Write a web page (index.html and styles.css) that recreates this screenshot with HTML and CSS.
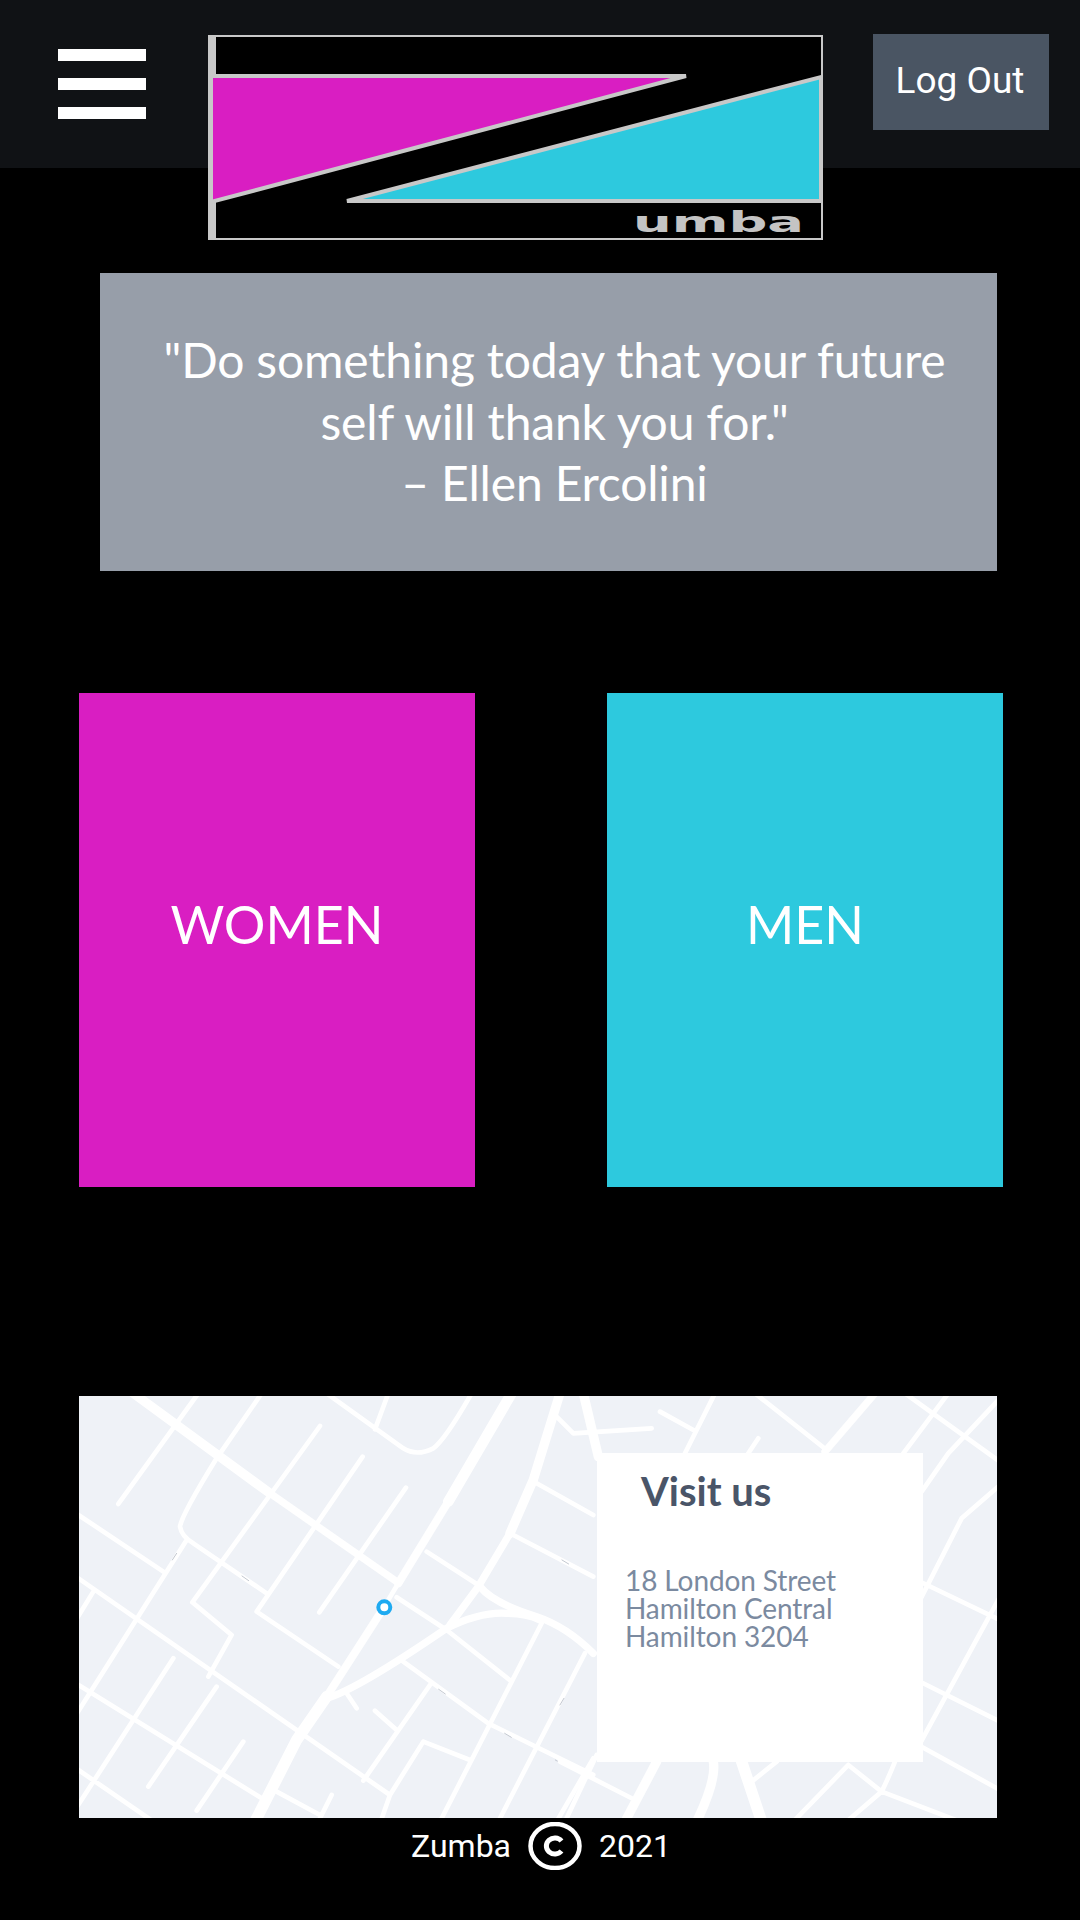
FILE: index.html
```html
<!DOCTYPE html>
<html lang="en">
<head>
    <meta charset="UTF-8">
    <meta name="viewport" content="width=device-width, initial-scale=1.0">
    <title>Zumba</title>
    <link rel="stylesheet" href="styles.css">
</head>
<body>

<header class="top-bar">
    <div class="menu-icon">
        <span></span>
        <span></span>
        <span></span>
    </div>
    <svg class="logo" viewBox="0 0 615 205">
        <rect x="0" y="0" width="615" height="205" fill="#000"/>
        <rect x="1" y="1" width="613" height="203" fill="none" stroke="#c8c8c8" stroke-width="2"/>
        <rect x="0" y="0" width="8" height="205" fill="#c8c8c8"/>
        <polygon points="3,41 478,41 3,167" fill="#d91ec2" stroke="#c8c8c8" stroke-width="4"/>
        <polygon points="613,42 613,166 139,166" fill="#2dc9de" stroke="#c8c8c8" stroke-width="4"/>
        <text class="logo-text" x="425" y="197" textLength="171" lengthAdjust="spacingAndGlyphs">umba</text>
    </svg>
    <button class="logout" type="button">Log Out</button>
</header>

<section class="quote">
    <p>"Do something today that your future<br>self will thank you for."<br>– Ellen Ercolini</p>
</section>

<section class="tiles">
    <a class="tile tile-women" href="#">WOMEN</a>
    <a class="tile tile-men" href="#">MEN</a>
</section>

<section class="map">
    <svg class="map-art" viewBox="79 1396 918 422">
        <rect x="79" y="1396" width="918" height="422" fill="#eff2f7"/>
        <!-- left part of the map -->
        <g transform="translate(70 1390) scale(.3333)" fill="none" stroke="#fff" stroke-linecap="round" stroke-linejoin="round">
            <path stroke-width="14" d="M145 342L385 10M575 10L440 205Q335 375 330 410Q335 440 370 460L590 610M750 108L367 637L485 735L415 860M878 200L560 665L805 830M1008 293L748 667M770 10L1000 175Q1040 200 1090 175Q1125 150 1205 10M955 10L915 118M1070 485L1225 585M980 622L1130 720L1325 875M1415 700L1110 1295M1545 790L1285 1295M1570 1105L1460 1295M1000 815L1255 1000L1570 1155M1080 885L880 1172M915 962L980 1020M830 910L860 955M1060 1055L1200 1110M1060 1055L960 1215L932 1295M18 370L280 545M18 560L960 1215M350 450L18 975M70 605L18 690M18 880L575 1225M310 805L18 1255M440 890L235 1190M520 1055L380 1262M18 1135L250 1295M620 1205L750 1275M785 1215L745 1295M1400 280L1570 375M1330 435L1570 560M985 580L940 655"/>
            <path stroke-width="28" d="M190 10L600 310"/>
            <path stroke-width="22" d="M600 310L985 578"/>
            <path stroke-width="32" d="M1325 10L1135 335"/>
            <path stroke-width="24" d="M1135 335L985 580M940 655L770 920"/>
            <path stroke-width="34" d="M770 920L680 1050L555 1295"/>
            <path stroke-width="28" d="M1470 10L1390 270L1320 430"/>
            <path stroke-width="22" d="M1320 430L1225 590L1140 705"/>
            <path stroke-width="22" d="M1230 590Q1270 640 1400 680Q1490 710 1570 790"/>
            <path stroke-width="22" d="M770 925Q860 900 1130 715Q1230 665 1310 670Q1370 670 1410 690"/>
            <path stroke-width="3" stroke="#c3c8d0" d="M307 510L320 490M516 558L536 572M1476 510L1496 522M1106 898L1126 912M1304 1030L1324 1042M1456 1110L1476 1122M1470 945L1482 925"/>
        </g>
        <!-- right part of the map, mostly behind the card -->
        <g transform="translate(560 1390) scale(.3333)" fill="none" stroke="#fff" stroke-linecap="round" stroke-linejoin="round">
            <path stroke-width="14" d="M-20 70L40 130L275 115M300 65L400 120M465 10L375 190M595 145L565 190M585 10L800 180M1035 10L1320 215M1165 10L1030 190M1320 25L1165 190L1085 305M1320 285L1205 385L1070 650M1070 570L1320 690M1320 620L1075 1070M1070 870L1320 995M1075 1065L1320 1200M0 1115L215 1225M110 1095L15 1295M650 1115L575 1175M865 1125L700 1295M865 1125L965 1205L1200 1295M1005 1115Q985 1165 965 1205L860 1295"/>
            <path stroke-width="22" d="M945 10L795 185"/>
            <path stroke-width="28" d="M70 10L115 200M290 1115L195 1295M460 1115Q470 1170 410 1295"/>
            <path stroke-width="34" d="M545 1115L605 1295"/>
        </g>
        <circle class="map-pin" cx="384.3" cy="1607.3" r="6"/>
    </svg>
    <div class="visit-card">
        <h3>Visit us</h3>
        <p>18 London Street<br>Hamilton Central<br>Hamilton 3204</p>
    </div>
</section>

<footer class="site-footer">
    <span>Zumba</span>
    <svg class="copyright" viewBox="0 0 54 48">
        <ellipse cx="27" cy="24" rx="24.500" ry="22" fill="none" stroke="#fff" stroke-width="4.500"/>
        <path d="M33.500 19A8.500 8 0 1 0 33.500 29" fill="none" stroke="#fff" stroke-width="5"/>
    </svg>
    <span>2021</span>
</footer>

</body>
</html>
```

FILE: styles.css
```css
body {
    font-family: 'Lato', sans-serif;
    margin: 0;
    padding: 0;
    background-color: #000;
    min-height: 100vh;
}
.top-bar {
    display: flex;
    align-items: flex-start;
    height: 168px;
    background-color: #101215;
}
.menu-icon {
    display: flex;
    flex-direction: column;
    gap: 17px;
    width: 88px;
    margin: 49px 0 0 58px;
}
.menu-icon span {
    display: block;
    height: 12px;
    background-color: #fff;
}
.logo {
    display: block;
    flex-shrink: 0;
    width: 615px;
    height: 205px;
    margin: 35px 0 0 62px;
}
.logo-text {
    font-family: 'DejaVu Sans', sans-serif;
    font-weight: bold;
    font-size: 28px;
    fill: #c4c4c4;
}
.logout {
    width: 176px;
    height: 96px;
    margin: 34px 0 0 50px;
    padding: 0 2px 3px 0;
    border: none;
    background-color: #4a5563;
    color: #fff;
    font-family: 'Roboto', sans-serif;
    font-size: 37px;
    cursor: pointer;
}
.quote {
    box-sizing: border-box;
    width: 897px;
    height: 298px;
    margin: 105px 0 0 100px;
    padding: 56px 30px 0 42px;
    background-color: #979ea9;
    color: #fff;
    text-align: center;
}
.quote p {
    margin: 0;
    font-size: 48px;
    line-height: 61.500px;
    letter-spacing: -0.17px;
}
.tiles {
    display: flex;
    gap: 132px;
    margin: 122px 0 0 79px;
}
.tile {
    display: flex;
    align-items: center;
    justify-content: center;
    box-sizing: border-box;
    width: 396px;
    height: 494px;
    padding-bottom: 33px;
    color: #fff;
    font-size: 52px;
    text-decoration: none;
}
.tile-women {
    background-color: #d91ec2;
}
.tile-men {
    background-color: #2dc9de;
}
.map {
    position: relative;
    width: 918px;
    height: 422px;
    margin: 209px 0 0 79px;
}
.map-art {
    display: block;
    width: 918px;
    height: 422px;
}
.map-pin {
    fill: #fff;
    stroke: #1eaaf1;
    stroke-width: 4;
}
.visit-card {
    position: absolute;
    left: 518px;
    top: 57px;
    box-sizing: border-box;
    width: 326px;
    height: 309px;
    padding: 13px 28px;
    background-color: #fff;
}
.visit-card h3 {
    margin: 0 0 50px 16px;
    color: #4a5568;
    font-size: 40px;
    font-weight: bold;
    line-height: 50px;
}
.visit-card p {
    margin: 0;
    color: #7b8aa0;
    font-size: 28px;
    line-height: 28px;
    letter-spacing: -0.1px;
}
.site-footer {
    display: flex;
    justify-content: center;
    align-items: center;
    gap: 17px;
    padding: 4px 0 0 2px;
    color: #fff;
    font-family: 'Roboto', sans-serif;
    font-size: 32px;
}
.copyright {
    display: block;
    width: 54px;
    height: 48px;
}
```
